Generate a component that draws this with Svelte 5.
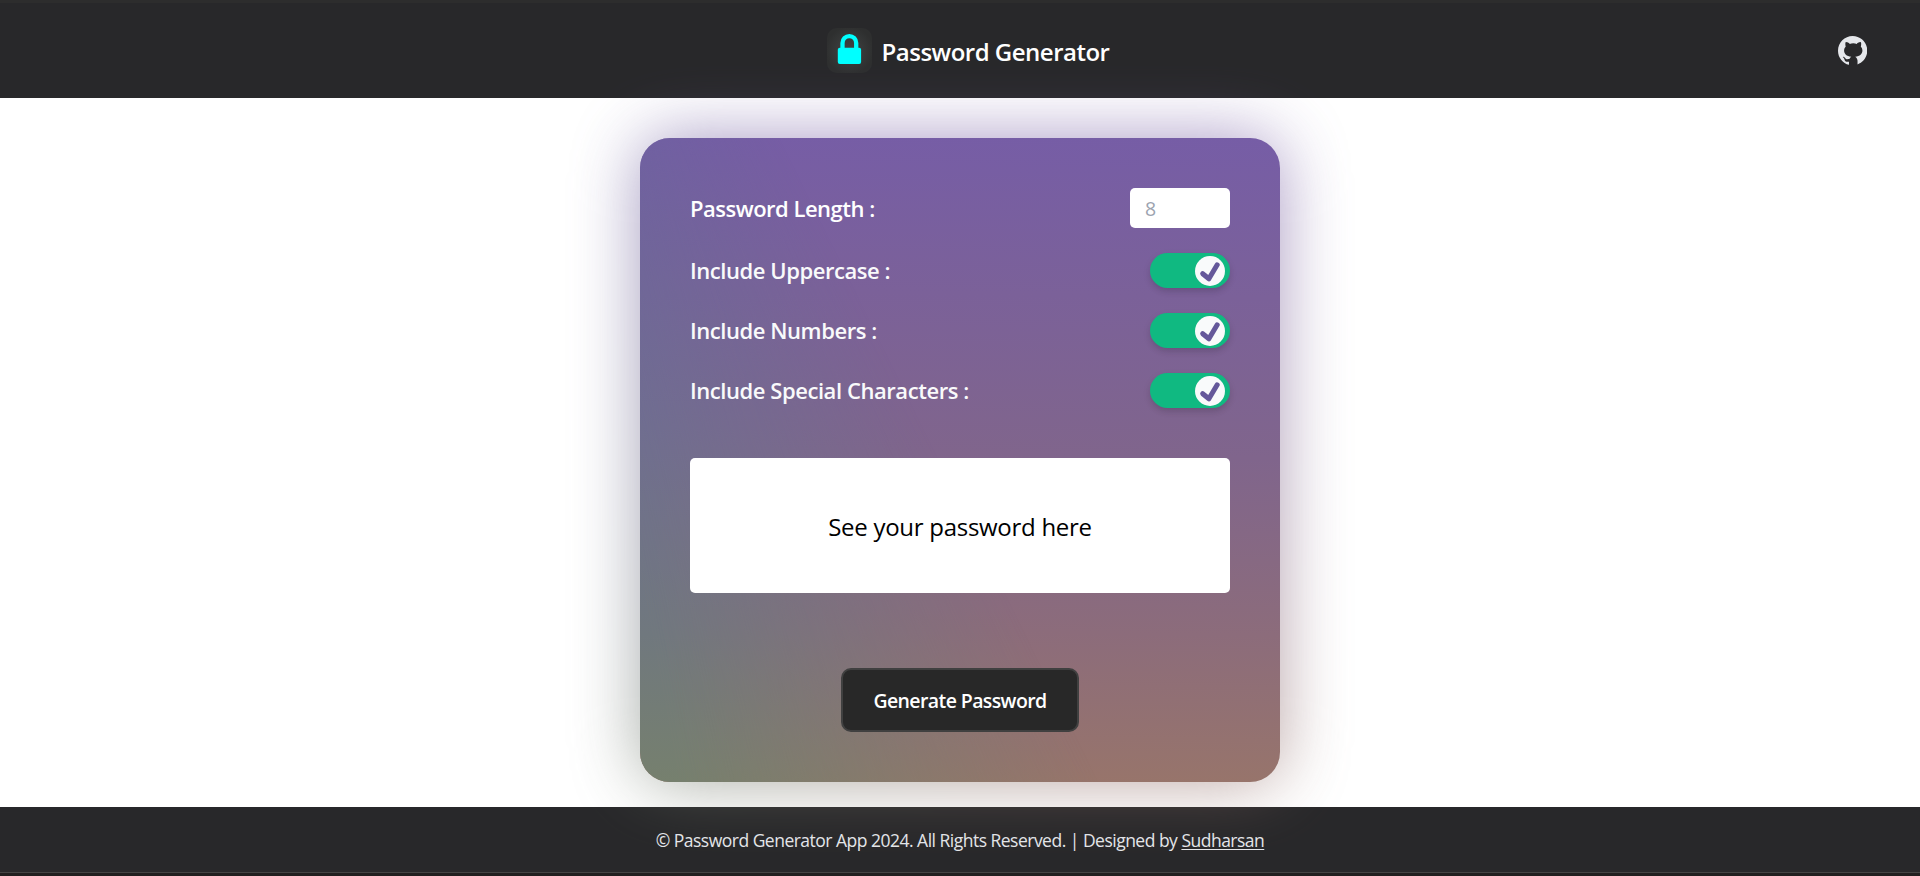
<script>
  let length = $state('');
  let options = $state([
    { label: 'Include Uppercase :', on: true },
    { label: 'Include Numbers :', on: true },
    { label: 'Include Special Characters :', on: true }
  ]);
  let password = $state('');

  function generate() {
    let chars = 'abcdefghijklmnopqrstuvwxyz';
    if (options[0].on) chars += 'ABCDEFGHIJKLMNOPQRSTUVWXYZ';
    if (options[1].on) chars += '0123456789';
    if (options[2].on) chars += '!@#$%^&*()_+-=';
    const count = Math.min(Number(length) || 8, 20);
    password = Array.from({ length: count }, () => chars[Math.floor(Math.random() * chars.length)]).join('');
  }
</script>

<div class="page">
  <header>
    <span class="logo">
      <svg viewBox="0 0 45 45" width="45" height="45" aria-hidden="true">
        <path d="M15.5 21V15.9a6.85 6.85 0 0 1 13.7 0V21" transform="translate(0 -1)" fill="none" stroke="#00ffff" stroke-width="4.3" />
        <rect x="10.8" y="19.7" width="23.3" height="16.4" rx="2" fill="#00ffff" />
      </svg>
    </span>
    <h1>Password Generator</h1>
    <a class="github" href="#github" aria-label="GitHub">
      <svg viewBox="3 3 24 24" width="29.3" height="29.3" fill="#e5e7eb">
        <path d="M15,3C8.373,3,3,8.373,3,15c0,5.623,3.872,10.328,9.092,11.63C12.036,26.468,12,26.28,12,26.047v-2.051c-0.487,0-1.303,0-1.508,0c-0.821,0-1.551-0.353-1.905-1.009c-0.393-0.729-0.461-1.844-1.435-2.526c-0.289-0.227-0.069-0.486,0.264-0.451c0.615,0.174,1.125,0.596,1.605,1.222c0.478,0.627,0.703,0.769,1.596,0.769c0.433,0,1.081-0.025,1.691-0.121c0.328-0.833,0.895-1.6,1.588-1.962c-3.996-0.411-5.903-2.399-5.903-5.098c0-1.162,0.495-2.286,1.336-3.233C9.053,10.647,8.706,8.73,9.435,8c1.798,0,2.885,1.166,3.146,1.481C13.477,9.174,14.461,9,15.495,9c1.036,0,2.024,0.174,2.922,0.483C18.675,9.17,19.763,8,21.565,8c0.732,0.731,0.381,2.656,0.102,3.594c0.836,0.945,1.328,2.066,1.328,3.226c0,2.697-1.904,4.684-5.894,5.097C18.199,20.49,19,22.1,19,23.313v2.734c0,0.104-0.023,0.179-0.035,0.268C23.641,24.676,27,20.236,27,15C27,8.373,21.627,3,15,3z" />
      </svg>
    </a>
  </header>

  <main>
    <section class="card">
      <div class="surface halo"></div>
      <div class="surface"></div>
      <div class="body">
        <label class="row first">
          <span>Password Length :</span>
          <input class="length" placeholder="8" bind:value={length} />
        </label>
        {#each options as option}
          <div class="row">
            <span>{option.label}</span>
            <button
              class="toggle"
              class:on={option.on}
              role="switch"
              aria-checked={option.on}
              aria-label={option.label}
              onclick={() => (option.on = !option.on)}
            >
              <span class="knob">
                <svg viewBox="0 0 30 30" width="30" height="30">
                  <path d="M7.7 17.7L13.9 22.8L22.2 8.8" fill="none" stroke="#65589a" stroke-width="5" stroke-linecap="round" stroke-linejoin="round" />
                </svg>
              </span>
            </button>
          </div>
        {/each}
        <output>{password || 'See your password here'}</output>
        <button class="generate" onclick={generate}>Generate Password</button>
      </div>
    </section>
  </main>

  <footer>
    <p>© Password Generator App 2024. All Rights Reserved. | Designed by <a href="#author">Sudharsan</a></p>
  </footer>
</div>

<style>
  :global(body) {
    background: #211f1f;
  }
  .page,
  input,
  button {
    font-family: 'Segoe UI', 'Open Sans', 'Noto Sans', sans-serif;
  }
  .page,
  .page * {
    box-sizing: border-box;
  }
  .page {
    height: 876px;
    display: flex;
    flex-direction: column;
    overflow: hidden;
  }
  header {
    height: 98px;
    flex: none;
    display: grid;
    grid-template-columns: 1fr auto auto 1fr;
    align-items: center;
    background: #28282a;
    border-top: 3px solid #2d2d2d;
    padding: 0 53px 0 69px;
  }
  .logo {
    grid-column: 2;
    width: 45px;
    height: 45px;
    border-radius: 10px;
    margin-right: 10px;
    background: radial-gradient(circle, #414444 0%, #383a3a 35%, #2e2f2f 75%);
  }
  .logo svg,
  .github svg,
  .knob svg {
    display: block;
  }
  h1 {
    margin: 2px 0 0;
    font-size: 24px;
    line-height: 34px;
    font-weight: 600;
    letter-spacing: -0.5px;
    color: #fff;
  }
  .github {
    justify-self: end;
  }
  main {
    height: 709px;
    flex: none;
    display: flex;
    justify-content: center;
    align-items: flex-start;
    padding-top: 40px;
    background: #fff;
  }
  .card {
    position: relative;
    width: 640px;
    height: 644px;
  }
  .surface {
    position: absolute;
    inset: 0;
    border-radius: 30px;
    overflow: hidden;
    background: linear-gradient(181deg, #765da6 0%, #80658c 49%, #8c6c7b 76%, #98756a 100%);
  }
  .surface::after {
    content: '';
    position: absolute;
    inset: 0;
    background: linear-gradient(#6c629f 0%, #6e6f90 45%, #70787e 77%, #76806e 100%);
    mask-image: conic-gradient(from 0deg at -211px -707px, transparent 153.6deg, #000 169.5deg);
  }
  .halo {
    filter: blur(34px);
    opacity: 0.64;
  }
  .body {
    position: relative;
    display: flex;
    flex-direction: column;
    padding: 50px;
  }
  .row {
    display: flex;
    justify-content: space-between;
    align-items: center;
    height: 35px;
    margin-bottom: 25px;
    font-size: 22px;
    line-height: 34px;
    font-weight: 600;
    letter-spacing: -0.44px;
    color: #f9fafb;
  }
  .row > span {
    padding-bottom: 2px;
  }
  .first {
    height: 40px;
    letter-spacing: -0.5px;
    color: #fff;
  }
  .first > span {
    padding-bottom: 1px;
  }
  .length {
    width: 100px;
    height: 40px;
    border: 0;
    border-radius: 5px;
    padding: 0 15px;
    background: #fff;
    color: #111;
    font-size: 19.5px;
  }
  .length::placeholder {
    color: #9ca3af;
    opacity: 1;
  }
  .toggle {
    width: 80px;
    height: 35px;
    border: 0;
    border-radius: 18px;
    padding: 3px 5px 2px;
    display: flex;
    background: #9ca3af;
    box-shadow: 0 4px 6px -1px rgba(0, 0, 0, 0.1), 0 3px 8px rgba(0, 0, 0, 0.08);
  }
  .toggle.on {
    justify-content: flex-end;
    background: #10b981;
  }
  .knob {
    width: 30px;
    height: 30px;
    border-radius: 50%;
    background: #f9fafb;
  }
  output {
    display: flex;
    justify-content: center;
    align-items: center;
    height: 135px;
    margin-top: 25px;
    padding-top: 1px;
    border-radius: 5px;
    background: #fff;
    color: #000;
    font-size: 24px;
    font-weight: 400;
    letter-spacing: -0.28px;
  }
  .generate {
    align-self: center;
    width: 238px;
    height: 64px;
    margin-top: 75px;
    padding: 1px 0 0;
    border: 2px solid #404040;
    border-radius: 10px;
    background: #282828;
    color: #fff;
    font-size: 19.5px;
    font-weight: 600;
    letter-spacing: -0.6px;
  }
  footer {
    height: 66px;
    flex: none;
    position: relative;
    z-index: -1;
    display: flex;
    justify-content: center;
    align-items: center;
    padding-top: 1px;
    background: #28282a;
    border-bottom: 1px solid #454444;
  }
  footer p {
    margin: 0;
    font-size: 17.5px;
    letter-spacing: -0.51px;
    color: #e5e7eb;
  }
  footer a {
    color: inherit;
    text-underline-offset: 2px;
    text-decoration-thickness: 1px;
  }
</style>
